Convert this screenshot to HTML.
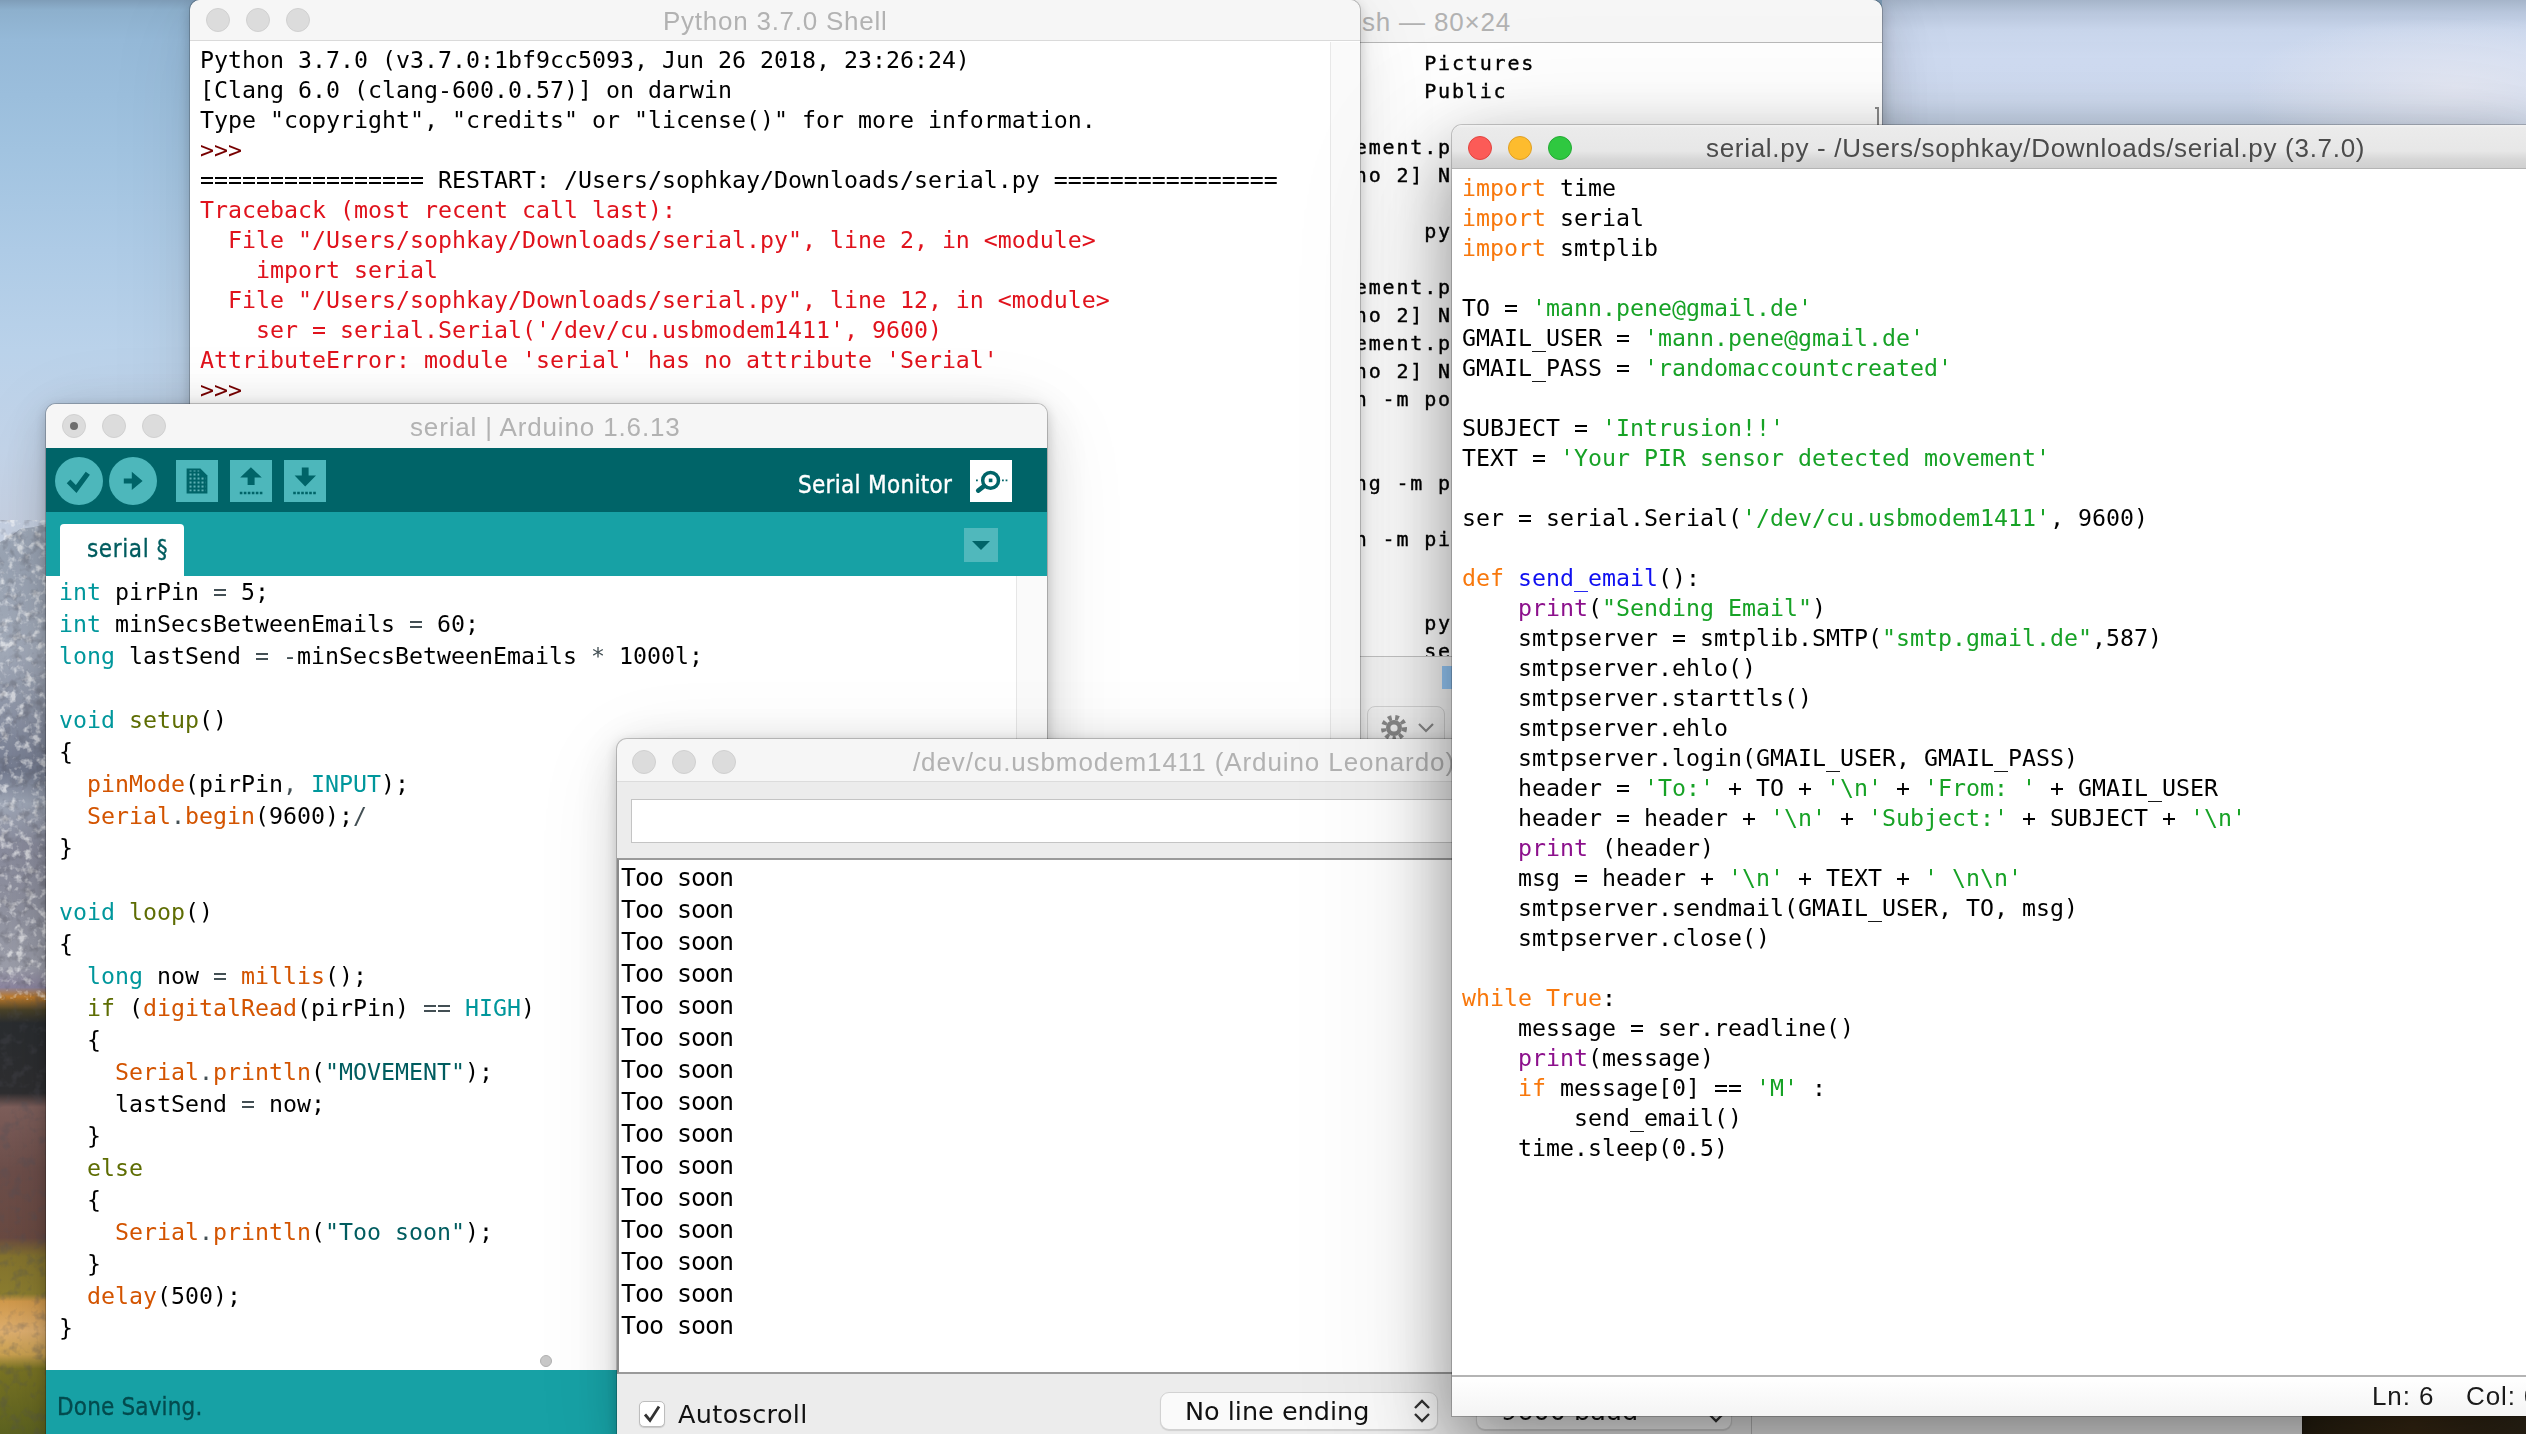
<!DOCTYPE html>
<html lang="en"><head><meta charset="utf-8"><title>Desktop</title>
<style>
*{box-sizing:border-box;margin:0;padding:0}
html,body{width:2526px;height:1434px;overflow:hidden;background:#8fb0d0}
body{position:relative;font-family:'Liberation Sans','DejaVu Sans',sans-serif;-webkit-font-smoothing:antialiased}
.abs{position:absolute}
pre{font-family:'DejaVu Sans Mono','Liberation Mono',monospace;white-space:pre;position:absolute;margin:0;will-change:transform}
.win{position:absolute;overflow:hidden}
.tl{position:absolute;width:24px;height:24px;border-radius:50%;background:#dcdcdc;border:1px solid #d0d0d0}
.title{position:absolute;font-size:26px;line-height:30px;white-space:nowrap;color:#b2b2b2;letter-spacing:.8px}
/* desktop */
#desk{left:0;top:0;width:2526px;height:1434px;
 background:linear-gradient(180deg,#7f9db8 0px,#8db0cd 10px,#95b9d8 40px,#a1c3e0 150px,#aecbe6 250px,#bad2ea 350px,#c3d4e9 450px,#c6d0e1 530px,#c6d0e1 1434px)}
#skyR{left:1882px;top:0;width:644px;height:126px;background:linear-gradient(180deg,#a6b5ca 0,#b8c6dc 12px,#c9d6ec 30px,#d0dcf2 60px,#cfdbf0 100px,#c4d2e6 126px)}
#skyR2{left:2250px;top:20px;width:276px;height:106px;background:radial-gradient(ellipse at 75% 65%,rgba(232,234,244,.85),rgba(226,230,242,.4) 50%,rgba(220,228,242,0) 75%)}
#skyRs{left:1882px;top:0;width:40px;height:126px;background:linear-gradient(90deg,rgba(70,95,125,.40),rgba(90,115,145,.12) 45%,rgba(0,0,0,0))}
#mtn{left:0;top:500px}
#deskBR{left:2302px;top:1416px;width:224px;height:18px;background:linear-gradient(90deg,#2a2212,#3a2a14 50%,#2c2416)}

/* Terminal */
#term{left:700px;top:0;width:1182px;height:656px;background:#fff;border-radius:10px 10px 0 0;box-shadow:0 0 0 1px rgba(0,0,0,.2),0 3px 14px rgba(0,0,0,.2),0 8px 50px rgba(0,0,0,.14),0 16px 90px rgba(0,0,0,.08)}
#term .bar{left:0;top:0;width:100%;height:43px;background:#f6f6f6;border-bottom:1px solid #b9b9b9}
#term pre{left:640.7px;top:48.6px;font-size:20px;letter-spacing:1.83px;line-height:28px;color:#000;-webkit-text-stroke:.4px #000}
#finder{left:1300px;top:656px;width:300px;height:100px;background:#f8f8f8;border-top:1px solid #c4c4c4}

/* Python Shell */
#shell{left:190px;top:0;width:1170px;height:900px;background:#fff;border-radius:10px 10px 0 0;box-shadow:0 0 0 1px rgba(0,0,0,.2),0 3px 14px rgba(0,0,0,.2),0 8px 50px rgba(0,0,0,.07),0 16px 90px rgba(0,0,0,.08)}
#shell .bar{left:0;top:0;width:100%;height:41px;background:#f6f6f6;border-bottom:1px solid #dadada;border-radius:10px 10px 0 0}
#shell pre{left:10px;top:45px;font-size:23.254px;line-height:30px}
#shell .k{color:#000}#shell .p{color:#770000}#shell .e{color:#e0121c}
#shell .sb{left:1140px;top:42px;width:30px;height:860px;background:#fafafa;border-left:1px solid #e8e8e8}

/* Arduino */
#ard{left:46px;top:404px;width:1000.5px;height:1040px;background:#fff;border-radius:10px 10px 0 0;box-shadow:0 0 0 1px rgba(0,0,0,.2),0 3px 14px rgba(0,0,0,.2),0 8px 50px rgba(0,0,0,.14),0 16px 90px rgba(0,0,0,.08)}
#ard .bar{left:0;top:0;width:100%;height:44px;background:#f6f6f6}
#ard .tool{left:0;top:44px;width:100%;height:64px;background:#006468}
#ard .tabs{left:0;top:108px;width:100%;height:64px;background:#17a1a5}
#ard .tab{left:14px;top:120px;width:124px;height:54px;background:#fff;border-radius:4px 4px 0 0}
#ard .circ{position:absolute;width:48px;height:48px;border-radius:50%;background:#4db7bb}
#ard .sq{position:absolute;width:42px;height:42px;background:#4db7bb}
#ard pre{left:12.6px;top:172px;font-size:23.254px;line-height:32px;color:#000}
#ard .t{color:#00979c}#ard .g{color:#5e6d03}#ard .f{color:#d35400}#ard .s{color:#005c5f}#ard .o{color:#434f54}
#ard .vsb{left:970px;top:172px;width:31px;height:794px;background:#fafafa;border-left:1px solid #e6e6e6}
#ard .status{left:0;top:966px;width:100%;height:80px;background:#17a1a5}

/* Serial monitor */
#mon{left:617px;top:739px;width:1685px;height:710px;background:#ececec;border-radius:10px 10px 0 0;box-shadow:0 0 0 1px rgba(0,0,0,.2),0 3px 14px rgba(0,0,0,.2),0 8px 50px rgba(0,0,0,.14),0 16px 90px rgba(0,0,0,.08)}
#mon .bar{left:0;top:0;width:100%;height:43px;background:#f6f6f6;border-bottom:1px solid #dcdcdc;border-radius:10px 10px 0 0}
#mon .inp{left:14px;top:60px;width:1400px;height:44px;background:#fff;border:1px solid #c4c4c4}
#mon .out{left:0;top:119px;width:1685px;height:516px;background:#fff;border-top:2px solid #9a9a9a;border-left:2px solid #8a8a8a;border-bottom:2px solid #9a9a9a}
#mon pre{left:4px;top:123px;font-size:25px;letter-spacing:-1.05px;line-height:32px;color:#000}
#mon .lbl{position:absolute;font-family:'DejaVu Sans','Liberation Sans',sans-serif;font-size:25.5px;line-height:30px;color:#111;white-space:nowrap}
#mon .sel{position:absolute;background:#fafafa;border:1px solid #d2d2d2;border-radius:9px;box-shadow:0 1px 1px rgba(0,0,0,.12)}

/* serial.py */
#py{left:1452px;top:125px;width:1090px;height:1291px;background:#fff;border-radius:10px 10px 0 0;box-shadow:0 0 0 1px rgba(0,0,0,.2),0 28px 70px rgba(0,0,0,.42),0 44px 150px 30px rgba(0,0,0,.085)}
#py .bar{left:0;top:0;width:100%;height:44px;background:linear-gradient(180deg,#f2f2f2 0,#ebebeb 3px,#e7e7e7 60%,#d7d7d7 80%,#cfcfcf 100%);border-bottom:1px solid #b4b4b4;border-radius:10px 10px 0 0}
#py pre{left:10px;top:48px;font-size:23.254px;line-height:30px;color:#000}
#py .kw{color:#f8780c}#py .st{color:#17a226}#py .df{color:#1010f0}#py .bi{color:#8c108c}
#py .stat{left:0;top:1250px;width:100%;height:41px;background:linear-gradient(180deg,#fff,#f4f4f4);border-top:2px solid #b4b4b4}
</style></head><body>
<div id="desk" class="abs"></div>
<div id="skyR" class="abs"></div>
<div id="skyR2" class="abs"></div>
<svg id="mtn" class="abs" width="60" height="934" viewBox="0 500 60 934">
 <defs>
  <linearGradient id="mg" gradientUnits="userSpaceOnUse" x1="0" y1="500" x2="0" y2="1434">
   <stop offset="0" stop-color="#a4aebd"/><stop offset=".06" stop-color="#9aa4b4"/><stop offset=".16" stop-color="#a3abba"/>
   <stop offset=".235" stop-color="#8b92a4"/><stop offset=".29" stop-color="#757c90"/><stop offset=".325" stop-color="#a0a8b8"/>
   <stop offset=".37" stop-color="#8a8c9d"/><stop offset=".43" stop-color="#8f919f"/><stop offset=".50" stop-color="#9c9eaa"/>
   <stop offset=".522" stop-color="#8d86a0"/><stop offset=".532" stop-color="#c07c2c"/><stop offset=".546" stop-color="#4a4228"/>
   <stop offset=".56" stop-color="#2a2d30"/><stop offset=".635" stop-color="#2e2e30"/><stop offset=".65" stop-color="#7e5f5b"/>
   <stop offset=".72" stop-color="#6d4e4a"/><stop offset=".79" stop-color="#6a4a42"/><stop offset=".81" stop-color="#85742e"/>
   <stop offset=".85" stop-color="#8c7e30"/><stop offset=".858" stop-color="#d29a4c"/><stop offset=".89" stop-color="#e0b070"/>
   <stop offset=".915" stop-color="#c9a050"/><stop offset=".93" stop-color="#7a7424"/><stop offset="1" stop-color="#5c6220"/>
  </linearGradient>
  <filter id="spkW" filterUnits="userSpaceOnUse" x="0" y="520" width="60" height="480"><feTurbulence type="fractalNoise" baseFrequency=".12" numOctaves="3" seed="4"/><feColorMatrix type="matrix" values="0 0 0 0 1  0 0 0 0 1  0 0 0 0 1  0 0 0 4 -2.05"/></filter>
  <filter id="spkB" filterUnits="userSpaceOnUse" x="0" y="520" width="60" height="914"><feTurbulence type="fractalNoise" baseFrequency=".09" numOctaves="3" seed="11"/><feColorMatrix type="matrix" values="0 0 0 0 .08  0 0 0 0 .08  0 0 0 0 .1  0 0 0 4 -2.05"/></filter>
 </defs>
 <path d="M0 542 L8 538 L20 529 L34 527 L46 524 L60 522 V1434 H0 Z" fill="url(#mg)"/>
 <g clip-path="none">
  <rect x="0" y="520" width="60" height="480" filter="url(#spkW)" opacity=".6"/>
  <rect x="0" y="520" width="60" height="914" filter="url(#spkB)" opacity=".28"/>
 </g>
</svg>
<div id="deskBR" class="abs"></div>

<!-- Terminal -->
<div id="term" class="win">
 <div class="bar abs"></div>
 <div class="title" style="left:662px;top:7px">sh — 80×24</div>
 <pre>      Pictures
      Public

 ement.p
 no 2] N

      py

 ement.p
 no 2] N
 ement.p
 no 2] N
 n -m po


 ng -m p

 n -m pi


      py
      se</pre>
 <div class="abs" style="left:1175px;top:107px;width:4px;height:22px;border-top:2px solid #8a8a8a;border-right:2px solid #8a8a8a"></div>
</div>
<div id="finder" class="abs">
 <div class="abs" style="left:67px;top:49px;width:78px;height:44px;border:1px solid #d6d6d6;border-radius:8px;background:#f6f6f6"></div>
 <svg class="abs" style="left:79px;top:56px" width="60" height="30" viewBox="0 0 60 30">
  <g fill="none" stroke="#8c8c8c" stroke-width="5" stroke-dasharray="3.6 3.6"><circle cx="15" cy="15" r="10.5"/></g>
  <circle cx="15" cy="15" r="8" fill="#8c8c8c"/><circle cx="15" cy="15" r="3.6" fill="#f4f4f4"/>
  <path d="M40 11 L47 18 L54 11" fill="none" stroke="#8c8c8c" stroke-width="2.2"/>
 </svg>
 <div class="abs" style="left:142px;top:9px;width:12px;height:23px;background:#98ccfc"></div>
</div>

<!-- Python shell -->
<div id="shell" class="win">
 <div class="bar abs"></div>
 <div class="tl" style="left:16px;top:8px"></div><div class="tl" style="left:56px;top:8px"></div><div class="tl" style="left:96px;top:8px"></div>
 <div class="title" style="left:473px;top:6px;letter-spacing:.75px">Python 3.7.0 Shell</div>
 <div class="sb abs"></div>
 <pre><span class="k">Python 3.7.0 (v3.7.0:1bf9cc5093, Jun 26 2018, 23:26:24) </span>
<span class="k">[Clang 6.0 (clang-600.0.57)] on darwin</span>
<span class="k">Type "copyright", "credits" or "license()" for more information.</span>
<span class="p">&gt;&gt;&gt; </span>
<span class="k">================ RESTART: /Users/sophkay/Downloads/serial.py ================</span>
<span class="e">Traceback (most recent call last):</span>
<span class="e">  File "/Users/sophkay/Downloads/serial.py", line 2, in &lt;module&gt;</span>
<span class="e">    import serial</span>
<span class="e">  File "/Users/sophkay/Downloads/serial.py", line 12, in &lt;module&gt;</span>
<span class="e">    ser = serial.Serial('/dev/cu.usbmodem1411', 9600)</span>
<span class="e">AttributeError: module 'serial' has no attribute 'Serial'</span>
<span class="p">&gt;&gt;&gt; </span></pre>
</div>

<!-- Arduino -->
<div id="ard" class="win">
 <div class="bar abs"></div>
 <div class="tl" style="left:16px;top:10px"></div><div class="tl" style="left:56px;top:10px"></div><div class="tl" style="left:96px;top:10px"></div>
 <div class="abs" style="left:24px;top:18px;width:8px;height:8px;border-radius:50%;background:#6e6e6e"></div>
 <div class="title" style="left:364px;top:8px;letter-spacing:.85px">serial | Arduino 1.6.13</div>
 <div class="tool abs"></div>
 <div class="tabs abs"></div>
 <div class="circ" style="left:9px;top:53px"></div>
 <div class="circ" style="left:63px;top:53px"></div>
 <div class="sq" style="left:130px;top:56px"></div>
 <div class="sq" style="left:184px;top:56px"></div>
 <div class="sq" style="left:238px;top:56px"></div>
 <svg class="abs" style="left:0;top:44px" width="340" height="64" viewBox="0 448 340 64">
  <defs><pattern id="dots" x="140.5" y="424.5" width="4" height="4" patternUnits="userSpaceOnUse"><rect x="1.2" y="1.2" width="1.7" height="1.7" fill="#7fcdd0"/></pattern></defs>
  <g transform="translate(-46,0)">
  <path d="M68.6 481.4 L76.2 489 L87.8 473.2" fill="none" stroke="#006468" stroke-width="5.2"/>
  <path d="M123.8 478.4 H131.8 V471.8 L142.6 480.9 L131.8 490 V483.6 H123.8 Z" fill="#006468"/>
  <path d="M186.6 468.6 H200.4 L207.4 475.6 V493.6 H186.6 Z" fill="#006468"/>
  <path d="M188.6 470.6 H199.4 V476.6 H205.4 V491.6 H188.6 Z" fill="url(#dots)"/>
  <path d="M250.9 467.2 L261.8 477.6 H254.6 V485 H247.6 V477.6 H240.2 Z" fill="#006468"/>
  <path d="M239.8 493 H263.4" stroke="#006468" stroke-width="2.6" stroke-dasharray="2.6 1.4"/>
  <path d="M305.2 486.4 L316 475.4 H308.6 V467.4 H301.8 V475.4 H294.6 Z" fill="#006468"/>
  <path d="M293.2 493 H317" stroke="#006468" stroke-width="2.6" stroke-dasharray="2.6 1.4"/>
  </g>
 </svg>
 <div class="abs albl" style="left:752px;top:63.5px;font:24px/34px 'DejaVu Sans Condensed','DejaVu Sans','Liberation Sans',sans-serif;color:#fff;white-space:nowrap;letter-spacing:.3px;-webkit-text-stroke:.35px #fff">Serial Monitor</div>
 <div class="abs" style="left:924px;top:56px;width:42px;height:42px;background:#fff"></div>
 <svg class="abs" style="left:924px;top:56px" width="42" height="42" viewBox="0 0 42 42">
  <circle cx="20.6" cy="20.4" r="7.9" fill="none" stroke="#006468" stroke-width="3.5"/>
  <rect x="18.8" y="18.6" width="3.6" height="3.6" fill="#006468"/>
  <path d="M14 26.2 L8.2 30.6" stroke="#006468" stroke-width="4.6" stroke-linecap="round"/>
  <path d="M6 20.4 H9 M32 20.4 H38.2" stroke="#006468" stroke-width="1.8" stroke-dasharray="1.8 1.8"/>
 </svg>
 <div class="abs" style="left:918px;top:124px;width:34px;height:34px;background:#50b8bc"></div>
 <svg class="abs" style="left:918px;top:124px" width="34" height="34" viewBox="0 0 34 34"><path d="M8 13 H26 L17 22 Z" fill="#006468"/></svg>
 <div class="tab abs"></div>
 <div class="abs albl" style="left:41px;top:128.5px;font:24px/32px 'DejaVu Sans Condensed','DejaVu Sans','Liberation Sans',sans-serif;color:#005c5f;white-space:nowrap;letter-spacing:.6px;-webkit-text-stroke:.3px #005c5f">serial §</div>
 <div class="vsb abs"></div>
 <pre><span class="t">int</span> pirPin <span class="o">=</span> 5;
<span class="t">int</span> minSecsBetweenEmails <span class="o">=</span> 60;
<span class="t">long</span> lastSend <span class="o">=</span> <span class="o">-</span>minSecsBetweenEmails <span class="o">*</span> 1000l;

<span class="t">void</span> <span class="g">setup</span>()
{
  <span class="f">pinMode</span>(pirPin<span class="o">,</span> <span class="t">INPUT</span>);
  <span class="f">Serial</span><span class="o">.</span><span class="f">begin</span>(9600);<span class="o">/</span>
}

<span class="t">void</span> <span class="g">loop</span>()
{
  <span class="t">long</span> now <span class="o">=</span> <span class="f">millis</span>();
  <span class="g">if</span> (<span class="f">digitalRead</span>(pirPin) <span class="o">==</span> <span class="t">HIGH</span>)
  {
    <span class="f">Serial</span><span class="o">.</span><span class="f">println</span>(<span class="s">"MOVEMENT"</span>);
    lastSend <span class="o">=</span> now;
  }
  <span class="g">else</span>
  {
    <span class="f">Serial</span><span class="o">.</span><span class="f">println</span>(<span class="s">"Too soon"</span>);
  }
  <span class="f">delay</span>(500);
}</pre>
 <div class="abs" style="left:494px;top:951px;width:12px;height:12px;border-radius:50%;background:#c8c8c8;border:1px solid #b0b0b0"></div>
 <div class="status abs"></div>
 <div class="abs albl" style="left:11px;top:986px;font:24px/34px 'DejaVu Sans Condensed','DejaVu Sans','Liberation Sans',sans-serif;color:#034b4e;white-space:nowrap;letter-spacing:.15px;-webkit-text-stroke:.3px #034b4e">Done Saving.</div>
</div>

<!-- Serial monitor -->
<div id="mon" class="win">
 <div class="bar abs"></div>
 <div class="tl" style="left:15px;top:11px"></div><div class="tl" style="left:55px;top:11px"></div><div class="tl" style="left:95px;top:11px"></div>
 <div class="title" style="left:296px;top:8px;letter-spacing:.9px">/dev/cu.usbmodem1411 (Arduino Leonardo)</div>
 <div class="inp abs"></div>
 <div class="out abs"></div>
 <pre>Too soon
Too soon
Too soon
Too soon
Too soon
Too soon
Too soon
Too soon
Too soon
Too soon
Too soon
Too soon
Too soon
Too soon
Too soon</pre>
 <div class="abs" style="left:22px;top:662px;width:26px;height:26px;background:#fff;border:1px solid #bdbdbd;border-radius:5px;box-shadow:0 1px 1px rgba(0,0,0,.15)"></div>
 <svg class="abs" style="left:22px;top:662px" width="26" height="26" viewBox="0 0 26 26"><path d="M6 13.5 L11 19.5 L20 5.5" fill="none" stroke="#333" stroke-width="2.8"/></svg>
 <div class="lbl" style="left:61px;top:660px;letter-spacing:.35px">Autoscroll</div>
 <div class="sel" style="left:543px;top:653px;width:278px;height:38px"></div>
 <div class="lbl" style="left:568px;top:657px">No line ending</div>
 <svg class="abs" style="left:793px;top:657px" width="24" height="30" viewBox="0 0 24 30"><path d="M5 12 L12 5 L19 12 M5 18 L12 25 L19 18" fill="none" stroke="#333" stroke-width="2.4"/></svg>
 <div class="sel" style="left:859px;top:653px;width:256px;height:38px"></div>
 <div class="lbl" style="left:884px;top:657px">9600 baud</div>
 <svg class="abs" style="left:1087px;top:657px" width="24" height="30" viewBox="0 0 24 30"><path d="M5 12 L12 5 L19 12 M5 18 L12 25 L19 18" fill="none" stroke="#333" stroke-width="2.4"/></svg>
 <div class="abs" style="left:1134px;top:640px;width:1px;height:70px;background:#bcbcbc"></div>
</div>

<!-- serial.py editor -->
<div id="py" class="win">
 <div class="bar abs"></div>
 <div class="tl" style="left:16px;top:11px;background:#fc5b57;border-color:#e2443f"></div>
 <div class="tl" style="left:56px;top:11px;background:#fdbc2e;border-color:#e0a024"></div>
 <div class="tl" style="left:96px;top:11px;background:#2fc840;border-color:#24aa34"></div>
 <div class="title" style="left:254px;top:8px;color:#4b4b4b;letter-spacing:.7px">serial.py - /Users/sophkay/Downloads/serial.py (3.7.0)</div>
 <pre><span class="kw">import</span> time
<span class="kw">import</span> serial
<span class="kw">import</span> smtplib

TO = <span class="st">'mann.pene@gmail.de'</span>
GMAIL_USER = <span class="st">'mann.pene@gmail.de'</span>
GMAIL_PASS = <span class="st">'randomaccountcreated'</span>

SUBJECT = <span class="st">'Intrusion!!'</span>
TEXT = <span class="st">'Your PIR sensor detected movement'</span>

ser = serial.Serial(<span class="st">'/dev/cu.usbmodem1411'</span>, 9600)

<span class="kw">def</span> <span class="df">send_email</span>():
    <span class="bi">print</span>(<span class="st">"Sending Email"</span>)
    smtpserver = smtplib.SMTP(<span class="st">"smtp.gmail.de"</span>,587)
    smtpserver.ehlo()
    smtpserver.starttls()
    smtpserver.ehlo
    smtpserver.login(GMAIL_USER, GMAIL_PASS)
    header = <span class="st">'To:'</span> + TO + <span class="st">'\n'</span> + <span class="st">'From: '</span> + GMAIL_USER
    header = header + <span class="st">'\n'</span> + <span class="st">'Subject:'</span> + SUBJECT + <span class="st">'\n'</span>
    <span class="bi">print</span> (header)
    msg = header + <span class="st">'\n'</span> + TEXT + <span class="st">' \n\n'</span>
    smtpserver.sendmail(GMAIL_USER, TO, msg)
    smtpserver.close()

<span class="kw">while</span> <span class="kw">True</span>:
    message = ser.readline()
    <span class="bi">print</span>(message)
    <span class="kw">if</span> message[0] == <span class="st">'M'</span> :
        send_email()
    time.sleep(0.5)</pre>
 <div class="stat abs"></div>
 <div class="abs" style="left:920px;top:1255px;font:26px/32px 'Liberation Sans','DejaVu Sans',sans-serif;color:#1a1a1a;white-space:nowrap;letter-spacing:.9px">Ln: 6</div>
 <div class="abs" style="left:1014px;top:1255px;font:26px/32px 'Liberation Sans','DejaVu Sans',sans-serif;color:#1a1a1a;white-space:nowrap;letter-spacing:.9px">Col: 0</div>
</div>
</body></html>
